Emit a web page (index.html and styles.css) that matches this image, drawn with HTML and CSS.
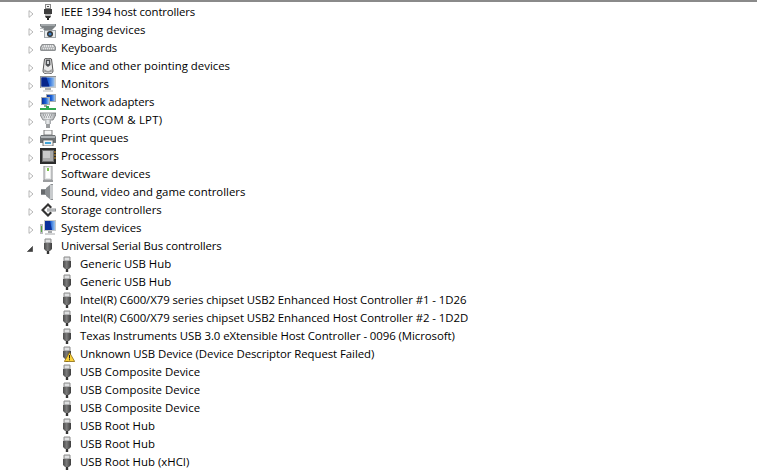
FILE: index.html
```html
<!DOCTYPE html>
<html lang="en">
<head>
<meta charset="utf-8">
<title>Device Manager</title>
<link rel="stylesheet" href="styles.css">
</head>
<body>
<svg class="defs" width="0" height="0" aria-hidden="true">
  <defs>
    <linearGradient id="body" x1="0" x2="1" y1="0" y2="0"><stop offset="0" stop-color="#4a4a4a"/><stop offset=".45" stop-color="#7c7c7c"/><stop offset="1" stop-color="#3c3c3c"/></linearGradient>
    <linearGradient id="steel" x1="0" x2="1" y1="0" y2="0"><stop offset="0" stop-color="#b5b8ba"/><stop offset=".5" stop-color="#eef0f1"/><stop offset="1" stop-color="#9a9da0"/></linearGradient>
    <linearGradient id="screen" x1="0" x2="1" y1="0" y2="0"><stop offset="0" stop-color="#0a2f9c"/><stop offset=".55" stop-color="#1b62d8"/><stop offset="1" stop-color="#9cc4ee"/></linearGradient>
    <symbol id="twisty-closed" viewBox="0 0 7 10"><path d="M1 .8 6 5 1 9.2Z" fill="#fff" stroke="#a6a6a6"/></symbol>
    <symbol id="twisty-open" viewBox="0 0 7 7"><path d="M6.500.5V6.500H.5Z" fill="#404040" stroke="#404040" stroke-width=".8"/></symbol>
    <symbol id="usb" viewBox="0 0 16 16">
      <path d="M5 1h6v4H5z" fill="#d5d6d7" stroke="#8d8d8d"/>
      <path d="M6.500 2.500h1v1h-1zM8.500 2.500h1v1h-1z" fill="#fff"/>
      <path d="M4 5h8v6l-2 2H6l-2-2z" fill="url(#body)"/>
      <path d="M6.800 13h2.400v3H6.800z" fill="#333"/>
    </symbol>
    <symbol id="firewire" viewBox="0 0 16 16">
      <path d="M5 0h6v5H5z" fill="#888"/><path d="M6 1h4v3H6z" fill="#f2f2f2"/><path d="M7 2h2v1H7z" fill="#555"/>
      <path d="M4 5h8v5H4z" fill="#3d3d3d"/><path d="M5 10h6v2H5z" fill="#b9b9b9"/><path d="M5 12h6l-1 2H6z" fill="#333"/>
      <path d="M7 14h2v2H7z" fill="#222"/>
    </symbol>
    <symbol id="imaging" viewBox="0 0 16 16">
      <path d="M0 2h16v2L12 8H4L0 4z" fill="#7d8285"/><path d="M1 2.500h14v1H1z" fill="#c9cdcf"/>
      <path d="M4 8h12v8H4z" fill="#9fa6aa"/><path d="M5 9h10v6H5z" fill="#e8ecee"/>
      <circle cx="10" cy="12" r="3" fill="#333"/><circle cx="10" cy="12" r="1.600" fill="#3b7fc4"/>
      <path d="M0 6h4v1H0zM0 9h3v1H0z" fill="#b8bcbe"/>
    </symbol>
    <symbol id="keyboard" viewBox="0 0 16 16">
      <path d="M2 4h12l2 3v3l-1 1H1L0 10V7z" fill="#8e9193"/>
      <path d="M3 5h10l1.500 2.500v2h-13v-2z" fill="#e4e5e6"/>
      <path d="M3 6h10M2.500 7.500h11M2 9h12" stroke="#8a8d90" stroke-dasharray="1 1"/>
    </symbol>
    <symbol id="mouse" viewBox="0 0 16 16">
      <path d="M4.500 1C6 0 10 0 11.500 1L13 13c0 2-2 3-5 3s-5-1-5-3z" fill="#e9e9e9" stroke="#565656"/>
      <path d="M5.800 1.500h4.400L10.500 7 8 9 5.500 7z" fill="#4d4f52"/>
      <path d="M7 3h2v3H7z" fill="#cfd2d4"/>
      <path d="M4.500 11c2 2.500 5 2.500 7 0l.5 2.500c-2 1.500-6 1.500-8 0z" fill="#9a9a9a"/>
    </symbol>
    <symbol id="monitor" viewBox="0 0 16 16">
      <path d="M0 0h16v12H0z" fill="#c9cbcc"/><path d="M0 0h16v1H0zM0 0h1v12H0z" fill="#8f9294"/>
      <path d="M1.500 1.500h13v9h-13z" fill="url(#screen)"/><path d="M1.500 1.500h5l3 9h-8z" fill="#07258a"/>
      <path d="M5 12h6v2H5z" fill="#a9abad"/><path d="M3 14h10v2H3z" fill="#d9dadb"/>
    </symbol>
    <symbol id="network" viewBox="0 0 16 16">
      <path d="M6 0h10v8H6z" fill="#a7acb0"/><path d="M7 1h8v6H7z" fill="url(#screen)"/>
      <path d="M1 3h9v8H1z" fill="#a7acb0"/><path d="M2 4h7v6H2z" fill="url(#screen)"/>
      <path d="M4 11h3v2H4z" fill="#9b9fa2"/>
      <path d="M6 12h3v2H6z" fill="#2fa84f"/><path d="M0 14h16v2H0z" fill="#2fa84f"/>
    </symbol>
    <symbol id="ports" viewBox="0 0 16 16">
      <path d="M0 1h16v1.500L13 8H3L0 2.500z" fill="url(#steel)" stroke="#77797b" stroke-width=".8"/>
      <path d="M3 3h10M4 5h8" stroke="#7a7c7e" stroke-dasharray="1 1"/>
      <path d="M5 8h6v4H5z" fill="url(#steel)"/><path d="M6 12h4v4H6z" fill="#9b9d9f"/>
    </symbol>
    <symbol id="printer" viewBox="0 0 16 16">
      <path d="M4 0h8v5H4z" fill="#f5f5f5" stroke="#7c7c7c"/>
      <path d="M1 5h14l1 2v6H0V7z" fill="#6f7376"/><path d="M1 6h14v2H1z" fill="#aeb2b5"/>
      <path d="M3 10h10v6H3z" fill="#f2f3f4" stroke="#5a5a5a" stroke-width=".8"/>
      <path d="M5 12h6v2H5z" fill="#42a5d8"/>
    </symbol>
    <symbol id="cpu" viewBox="0 0 16 16">
      <path d="M0 0h16v16H0z" fill="#2c2c2c"/>
      <path d="M2 2h12v12H2z" fill="#6f6f6f"/><path d="M3 3h10v10H3z" fill="#a9a9a9"/><path d="M3 3h7v7H3z" fill="#c9c9c9"/>
      <path d="M14 4h2M14 7h2M14 10h2" stroke="#d59b2e"/>
    </symbol>
    <symbol id="software" viewBox="0 0 16 16">
      <path d="M4 0h8v14H4z" fill="#e6e7e7" stroke="#8f9193"/>
      <path d="M6 2h4v10H6z" fill="#fff"/><path d="M7 2h2v3H7z" fill="#7cc34a"/>
      <path d="M3 14h10v2H3z" fill="#9a9c9e"/>
    </symbol>
    <symbol id="sound" viewBox="0 0 16 16">
      <path d="M1 5h5V4l5-4h2v16h-2l-5-4v-1H1z" fill="#8b8f92"/>
      <path d="M10 1h3v14h-3z" fill="#c8cbcd"/><path d="M1 6h4v4H1z" fill="#66696c"/>
    </symbol>
    <symbol id="storage" viewBox="0 0 16 16">
      <path d="M8 1l4 4-1.500 1.500L8 4 4 8l4 4 2.500-2.500L12 11l-4 4-7-7z" fill="#333"/>
      <path d="M7 6.500h9v3H7z" fill="#8e9194"/><path d="M7 7.500h8v1H7z" fill="#d6d8da"/>
    </symbol>
    <symbol id="system" viewBox="0 0 16 16">
      <path d="M0 4h3v10H0z" fill="#b9bbbd"/><path d="M1 6h1v6H1z" fill="#54a83c"/>
      <path d="M4 0h12v11H4z" fill="#c5c7c8"/><path d="M5 1h10v9H5z" fill="url(#screen)"/><path d="M5 1h5l2 9H5z" fill="#0a2f9c"/>
      <path d="M8 11h4v2H8z" fill="#a6a8aa"/><path d="M5 13h10v2H5z" fill="#d2d3d4"/>
    </symbol>
    <symbol id="warning" viewBox="0 0 11 10">
      <path d="M5.500.5 10.700 9.500H.3z" fill="#fbd23a" stroke="#8a6a12" stroke-width=".8"/>
      <path d="M5 3h1v3.500H5zM5 7.300h1v1H5z" fill="#222"/>
    </symbol>
  </defs>
</svg>

<ul class="tree">
  <li class="row"><svg class="twisty"><use href="#twisty-closed"/></svg><svg class="icon"><use href="#firewire"/></svg><span class="label tight">IEEE 1394 host controllers</span></li>
  <li class="row"><svg class="twisty"><use href="#twisty-closed"/></svg><svg class="icon"><use href="#imaging"/></svg><span class="label">Imaging devices</span></li>
  <li class="row"><svg class="twisty"><use href="#twisty-closed"/></svg><svg class="icon"><use href="#keyboard"/></svg><span class="label">Keyboards</span></li>
  <li class="row"><svg class="twisty"><use href="#twisty-closed"/></svg><svg class="icon"><use href="#mouse"/></svg><span class="label">Mice and other pointing devices</span></li>
  <li class="row"><svg class="twisty"><use href="#twisty-closed"/></svg><svg class="icon"><use href="#monitor"/></svg><span class="label">Monitors</span></li>
  <li class="row"><svg class="twisty"><use href="#twisty-closed"/></svg><svg class="icon"><use href="#network"/></svg><span class="label tight">Network adapters</span></li>
  <li class="row"><svg class="twisty"><use href="#twisty-closed"/></svg><svg class="icon"><use href="#ports"/></svg><span class="label wide">Ports (COM &amp; LPT)</span></li>
  <li class="row"><svg class="twisty"><use href="#twisty-closed"/></svg><svg class="icon"><use href="#printer"/></svg><span class="label">Print queues</span></li>
  <li class="row"><svg class="twisty"><use href="#twisty-closed"/></svg><svg class="icon"><use href="#cpu"/></svg><span class="label">Processors</span></li>
  <li class="row"><svg class="twisty"><use href="#twisty-closed"/></svg><svg class="icon"><use href="#software"/></svg><span class="label">Software devices</span></li>
  <li class="row"><svg class="twisty"><use href="#twisty-closed"/></svg><svg class="icon"><use href="#sound"/></svg><span class="label">Sound, video and game controllers</span></li>
  <li class="row"><svg class="twisty"><use href="#twisty-closed"/></svg><svg class="icon"><use href="#storage"/></svg><span class="label">Storage controllers</span></li>
  <li class="row"><svg class="twisty"><use href="#twisty-closed"/></svg><svg class="icon"><use href="#system"/></svg><span class="label">System devices</span></li>
  <li class="row"><svg class="twisty twisty-open"><use href="#twisty-open"/></svg><svg class="icon"><use href="#usb"/></svg><span class="label tight">Universal Serial Bus controllers</span></li>
  <li class="row child"><svg class="icon"><use href="#usb"/></svg><span class="label">Generic USB Hub</span></li>
  <li class="row child"><svg class="icon"><use href="#usb"/></svg><span class="label">Generic USB Hub</span></li>
  <li class="row child"><svg class="icon"><use href="#usb"/></svg><span class="label slight">Intel(R) C600/X79 series chipset USB2 Enhanced Host Controller #1 - 1D26</span></li>
  <li class="row child"><svg class="icon"><use href="#usb"/></svg><span class="label slight">Intel(R) C600/X79 series chipset USB2 Enhanced Host Controller #2 - 1D2D</span></li>
  <li class="row child"><svg class="icon"><use href="#usb"/></svg><span class="label slight">Texas Instruments USB 3.0 eXtensible Host Controller - 0096 (Microsoft)</span></li>
  <li class="row child"><span class="icon-wrap"><svg class="icon"><use href="#usb"/></svg><svg class="badge"><use href="#warning"/></svg></span><span class="label slight">Unknown USB Device (Device Descriptor Request Failed)</span></li>
  <li class="row child"><svg class="icon"><use href="#usb"/></svg><span class="label">USB Composite Device</span></li>
  <li class="row child"><svg class="icon"><use href="#usb"/></svg><span class="label">USB Composite Device</span></li>
  <li class="row child"><svg class="icon"><use href="#usb"/></svg><span class="label">USB Composite Device</span></li>
  <li class="row child"><svg class="icon"><use href="#usb"/></svg><span class="label">USB Root Hub</span></li>
  <li class="row child"><svg class="icon"><use href="#usb"/></svg><span class="label">USB Root Hub</span></li>
  <li class="row child"><svg class="icon"><use href="#usb"/></svg><span class="label">USB Root Hub (xHCI)</span></li>
</ul>
</body>
</html>
```
FILE: styles.css
```css
html, body {
  margin: 0;
  padding: 0;
  height: 100%;
  overflow: hidden;
  background: #fff;
}
body {
  border-top: 2px solid #8a8a8a;
  box-sizing: border-box;
  font-family: "Open Sans", "Noto Sans", sans-serif;
  font-size: 11.4px;
  color: #000;
}
.defs {
  position: absolute;
}
.tree {
  list-style: none;
  margin: 0;
  padding: 1px 0 0;
}
.row {
  display: flex;
  align-items: center;
  height: 18px;
  padding-left: 27px;
  white-space: nowrap;
}
.child {
  padding-left: 59px;
}
.twisty {
  width: 6px;
  height: 8px;
  margin: 4px 6px 0 1px;
  flex: none;
}
.twisty.twisty-open {
  width: 6px;
  height: 6px;
  margin: 6px 7px 0 0;
}
.icon {
  width: 16px;
  height: 16px;
  flex: none;
}
.icon-wrap {
  position: relative;
  width: 16px;
  height: 16px;
  flex: none;
}
.badge {
  position: absolute;
  right: 0;
  bottom: 0;
  width: 11px;
  height: 10px;
}
.label {
  margin: 0 0 2px 5px;
}
.tight {
  letter-spacing: -0.13px;
}
.slight {
  letter-spacing: -0.065px;
}
.wide {
  letter-spacing: 0.25px;
}
```
